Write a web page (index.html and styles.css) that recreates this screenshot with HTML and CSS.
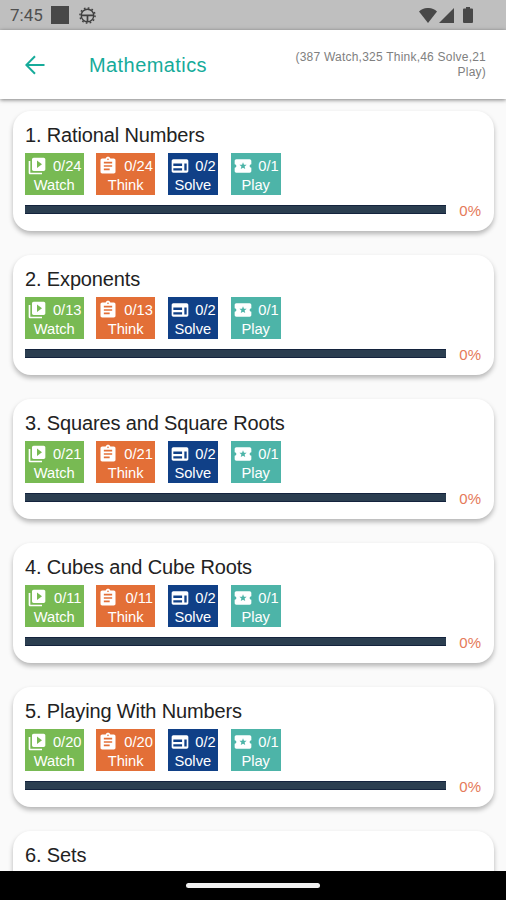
FILE: index.html
```html
<!doctype html>
<html lang="en">
  <head>
    <meta charset="UTF-8" />
    <meta name="viewport" content="width=device-width, initial-scale=1.0" />
    <title>Mathematics</title>
    <link rel="stylesheet" href="styles.css">
  </head>
  <body>
    <svg class="sprite" aria-hidden="true">
      <symbol id="icon-watch" viewBox="0 0 24 24">
        <path d="M4 6H2v14c0 1.1.9 2 2 2h14v-2H4V6zm16-4H8c-1.1 0-2 .9-2 2v12c0 1.1.9 2 2 2h12c1.1 0 2-.9 2-2V4c0-1.1-.9-2-2-2zm-8 12.5v-9l6 4.5-6 4.5z" />
      </symbol>
      <symbol id="icon-think" viewBox="0 0 24 24">
        <path d="M19 3h-4.18C14.4 1.84 13.3 1 12 1s-2.4.84-2.82 2H5c-1.1 0-2 .9-2 2v14c0 1.1.9 2 2 2h14c1.1 0 2-.9 2-2V5c0-1.1-.9-2-2-2zm-7 0c.55 0 1 .45 1 1s-.45 1-1 1-1-.45-1-1 .45-1 1-1zm2 14H7v-2h7v2zm3-4H7v-2h10v2zm0-4H7V7h10v2z" />
      </symbol>
      <symbol id="icon-solve" viewBox="0 0 24 24">
        <path d="M20 4H4c-1.1 0-2 .9-2 2v12c0 1.1.9 2 2 2h16c1.1 0 2-.9 2-2V6c0-1.1-.9-2-2-2zm-5.5 13.5H4v-2.7h10.5v2.7zm0-5.5H4V9h10.5v3zm5.5 5.5h-2.8V9H20v8.5z" />
      </symbol>
      <symbol id="icon-play" viewBox="0 0 24 24">
        <path d="M20 12c0-1.1.9-2 2-2V6c0-1.1-.9-2-2-2H4c-1.1 0-1.99.9-1.99 2v4c1.1 0 1.99.9 1.99 2s-.89 2-2 2v4c0 1.1.9 2 2 2h16c1.1 0 2-.9 2-2v-4c-1.1 0-2-.9-2-2zm-5.3 3.7L12 14l-2.7 1.7.8-3.1-2.4-2 3.2-.2L12 7.4l1.2 3 3.2.2-2.5 2z" />
      </symbol>
    </svg>

    <div class="status-bar">
      <span class="clock">7:45</span>
      <span class="status-square"></span>
      <svg class="status-wheel" viewBox="0 0 18 18" aria-hidden="true">
        <circle cx="9" cy="9" r="8" stroke-width="1.6" stroke-dasharray="1.8 2.39" />
        <circle cx="9" cy="9" r="6.6" stroke-width="1.5" />
        <path d="M2.5 8.8h13M9 9v6.5" stroke-width="1.8" />
      </svg>
      <div class="status-right">
        <svg class="wifi" viewBox="0 0 18 15" aria-hidden="true"><path d="M0 3.5C5-1.2 13-1.2 18 3.5L9 15z" /></svg>
        <svg class="signal" viewBox="0 0 15 15" aria-hidden="true"><path d="M15 0v15H0z" /></svg>
        <svg class="battery" viewBox="0 0 10 16" aria-hidden="true"><path d="M3 0h4v1.6h2q1 0 1 1V15q0 1-1 1H1q-1 0-1-1V2.6q0-1 1-1h2z" /></svg>
      </div>
    </div>

    <header class="app-bar">
      <svg class="back" viewBox="0 0 20 20" aria-hidden="true"><path d="M19.5 10H1.5M10 1.2L1.3 10l8.7 8.8" /></svg>
      <h1 class="subject">Mathematics</h1>
      <p class="totals">(387 Watch,325 Think,46 Solve,21 Play)</p>
    </header>

    <main class="chapters">
      <section class="card">
        <h2 class="chapter">1. Rational Numbers</h2>
        <div class="badges">
          <div class="badge watch"><svg class="icon"><use href="#icon-watch" /></svg><span class="count">0/24</span><span class="label">Watch</span></div>
          <div class="badge think"><svg class="icon"><use href="#icon-think" /></svg><span class="count">0/24</span><span class="label">Think</span></div>
          <div class="badge solve"><svg class="icon"><use href="#icon-solve" /></svg><span class="count">0/2</span><span class="label">Solve</span></div>
          <div class="badge play"><svg class="icon"><use href="#icon-play" /></svg><span class="count">0/1</span><span class="label">Play</span></div>
        </div>
        <div class="progress"><div class="track"></div><span class="percent">0%</span></div>
      </section>

      <section class="card">
        <h2 class="chapter">2. Exponents</h2>
        <div class="badges">
          <div class="badge watch"><svg class="icon"><use href="#icon-watch" /></svg><span class="count">0/13</span><span class="label">Watch</span></div>
          <div class="badge think"><svg class="icon"><use href="#icon-think" /></svg><span class="count">0/13</span><span class="label">Think</span></div>
          <div class="badge solve"><svg class="icon"><use href="#icon-solve" /></svg><span class="count">0/2</span><span class="label">Solve</span></div>
          <div class="badge play"><svg class="icon"><use href="#icon-play" /></svg><span class="count">0/1</span><span class="label">Play</span></div>
        </div>
        <div class="progress"><div class="track"></div><span class="percent">0%</span></div>
      </section>

      <section class="card">
        <h2 class="chapter">3. Squares and Square Roots</h2>
        <div class="badges">
          <div class="badge watch"><svg class="icon"><use href="#icon-watch" /></svg><span class="count">0/21</span><span class="label">Watch</span></div>
          <div class="badge think"><svg class="icon"><use href="#icon-think" /></svg><span class="count">0/21</span><span class="label">Think</span></div>
          <div class="badge solve"><svg class="icon"><use href="#icon-solve" /></svg><span class="count">0/2</span><span class="label">Solve</span></div>
          <div class="badge play"><svg class="icon"><use href="#icon-play" /></svg><span class="count">0/1</span><span class="label">Play</span></div>
        </div>
        <div class="progress"><div class="track"></div><span class="percent">0%</span></div>
      </section>

      <section class="card">
        <h2 class="chapter">4. Cubes and Cube Roots</h2>
        <div class="badges">
          <div class="badge watch"><svg class="icon"><use href="#icon-watch" /></svg><span class="count">0/11</span><span class="label">Watch</span></div>
          <div class="badge think"><svg class="icon"><use href="#icon-think" /></svg><span class="count">0/11</span><span class="label">Think</span></div>
          <div class="badge solve"><svg class="icon"><use href="#icon-solve" /></svg><span class="count">0/2</span><span class="label">Solve</span></div>
          <div class="badge play"><svg class="icon"><use href="#icon-play" /></svg><span class="count">0/1</span><span class="label">Play</span></div>
        </div>
        <div class="progress"><div class="track"></div><span class="percent">0%</span></div>
      </section>

      <section class="card">
        <h2 class="chapter">5. Playing With Numbers</h2>
        <div class="badges">
          <div class="badge watch"><svg class="icon"><use href="#icon-watch" /></svg><span class="count">0/20</span><span class="label">Watch</span></div>
          <div class="badge think"><svg class="icon"><use href="#icon-think" /></svg><span class="count">0/20</span><span class="label">Think</span></div>
          <div class="badge solve"><svg class="icon"><use href="#icon-solve" /></svg><span class="count">0/2</span><span class="label">Solve</span></div>
          <div class="badge play"><svg class="icon"><use href="#icon-play" /></svg><span class="count">0/1</span><span class="label">Play</span></div>
        </div>
        <div class="progress"><div class="track"></div><span class="percent">0%</span></div>
      </section>

      <section class="card">
        <h2 class="chapter">6. Sets</h2>
      </section>
    </main>

    <div class="nav-bar"><div class="nav-handle"></div></div>
  </body>
</html>
```
FILE: styles.css
```css
* {
  box-sizing: border-box;
}

body {
  margin: 0;
  height: 900px;
  display: flex;
  flex-direction: column;
  overflow: hidden;
  background: #fafafa;
  font-family: "Liberation Sans", Arial, sans-serif;
}

.sprite {
  display: none;
}

.status-bar {
  flex: none;
  height: 30px;
  padding: 0 33px 0 10px;
  display: flex;
  align-items: center;
  background: #bfbfbf;
  color: #505050;
}

.clock {
  width: 41px;
  font-family: Roboto, sans-serif;
  font-size: 17px;
  line-height: 30px;
}

.status-square {
  width: 18px;
  height: 18px;
  background: #484848;
}

.status-wheel {
  width: 17px;
  height: 17px;
  margin-left: 10px;
  fill: none;
  stroke: #404040;
}

.status-right {
  margin-left: auto;
  display: flex;
  align-items: center;
  fill: #484848;
}

.wifi {
  width: 18px;
  height: 15px;
}

.signal {
  width: 15px;
  height: 15px;
  margin: 0 9px 0 2px;
}

.battery {
  width: 10px;
  height: 16px;
}

.app-bar {
  flex: none;
  position: relative;
  height: 69px;
  padding: 0 20px 0 25px;
  display: flex;
  align-items: center;
  background: #fff;
  box-shadow: 0 1px 4px rgba(0, 0, 0, 0.5);
}

.back {
  width: 20px;
  height: 20px;
  fill: none;
  stroke: #16ab9a;
  stroke-width: 2;
}

.subject {
  margin: 1px 0 0 44px;
  font-size: 20px;
  font-weight: normal;
  letter-spacing: 0.42px;
  color: #16ab9a;
}

.totals {
  width: 200px;
  margin: 1px 0 0 auto;
  font-size: 12px;
  line-height: 15px;
  letter-spacing: 0.22px;
  text-align: right;
  color: #808080;
}

.chapters {
  flex: 1;
  min-height: 0;
  padding: 12px 12px 0 13px;
  overflow: hidden;
}

.card {
  height: 120px;
  margin-bottom: 24px;
  padding: 13px 13px 0 12px;
  border-radius: 18px;
  background: #fff;
  box-shadow: 0 3px 5px rgba(0, 0, 0, 0.28);
}

.chapter {
  margin: 0 0 6px;
  font-size: 20px;
  line-height: 23px;
  font-weight: normal;
  letter-spacing: -0.14px;
  color: #222;
}

.badges {
  display: flex;
  gap: 12.4px;
}

.badge {
  width: 50.5px;
  height: 42px;
  padding: 3px 2.5px 0 2px;
  display: grid;
  grid-template-columns: 20px 1fr;
  grid-template-rows: 20px 18px;
  color: #fff;
  font-size: 14.7px;
}

.watch {
  width: 59px;
  background: #78ba53;
}

.think {
  width: 59px;
  background: #e36f37;
}

.solve {
  background: #104087;
}

.play {
  background: #4db4a8;
}

.icon {
  width: 20px;
  height: 20px;
  fill: #fff;
}

.count {
  line-height: 21px;
  text-align: right;
}

.label {
  grid-column: 1 / 3;
  line-height: 18px;
  text-align: center;
}

.progress {
  margin-top: 7px;
  display: flex;
  align-items: flex-start;
}

.track {
  width: 421px;
  height: 9px;
  margin-top: 3px;
  background: #2b3e50;
  border: solid #14233d;
  border-width: 1px 0;
}

.percent {
  margin-left: auto;
  font-size: 15px;
  line-height: 18px;
  color: #e57a5a;
}

.nav-bar {
  flex: none;
  height: 29px;
  padding-top: 12px;
  background: #000;
}

.nav-handle {
  width: 134px;
  height: 5px;
  margin: 0 auto;
  border-radius: 3px;
  background: #f0f0f0;
}
```
